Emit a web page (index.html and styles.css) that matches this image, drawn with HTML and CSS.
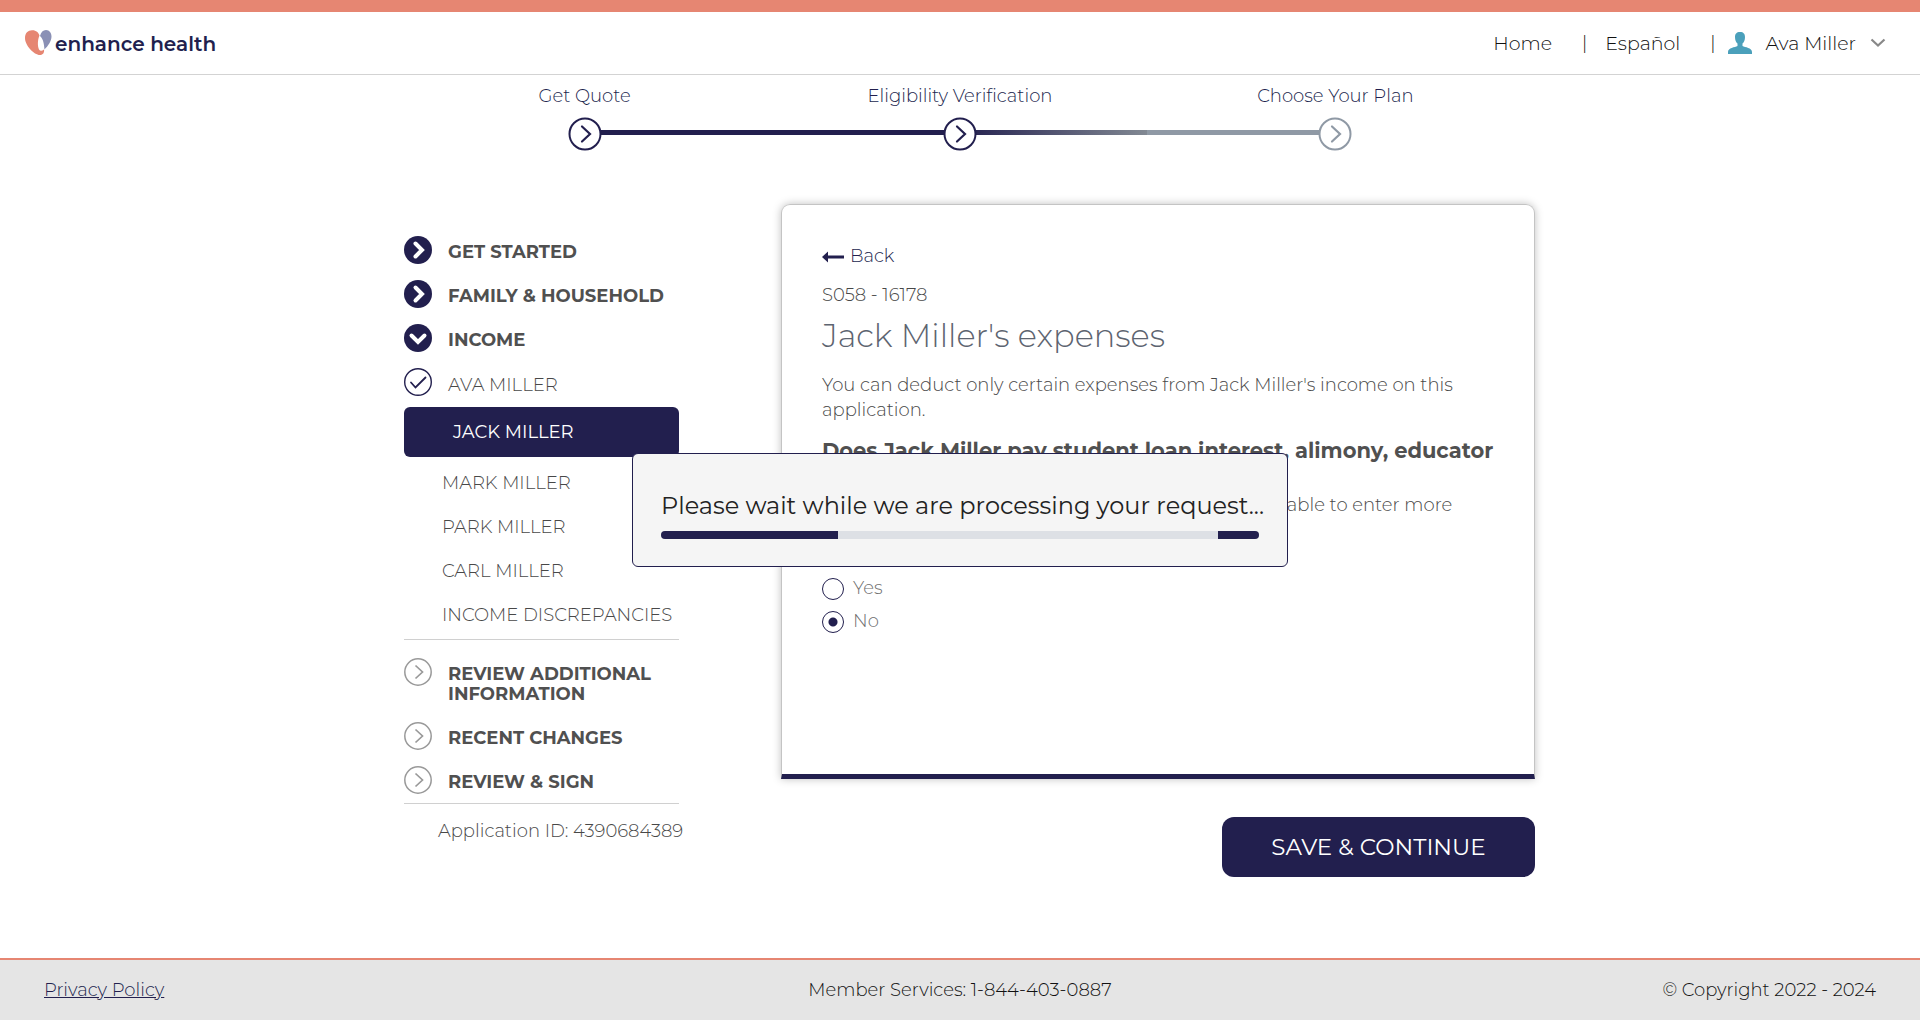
FILE: index.html
```html
<!DOCTYPE html>
<html lang="en">
<head>
<meta charset="utf-8">
<meta name="viewport" content="width=device-width, initial-scale=1">
<title>Enhance Health - Income</title>
<link rel="stylesheet" href="styles.css">
</head>
<body>
<svg class="sprite" aria-hidden="true">
  <symbol id="i-solid-right" viewBox="0 0 28 28"><circle cx="14" cy="14" r="14" fill="#221f4e"/><path d="M11.5 7.5l6.5 6.5-6.500 6.500" fill="none" stroke="#fff" stroke-width="4" stroke-linecap="round" stroke-linejoin="miter"/></symbol>
  <symbol id="i-solid-down" viewBox="0 0 28 28"><circle cx="14" cy="14" r="14" fill="#221f4e"/><path d="M7.500 11.500l6.500 6.500 6.500-6.500" fill="none" stroke="#fff" stroke-width="4" stroke-linecap="round"/></symbol>
  <symbol id="i-check" viewBox="0 0 28 28"><circle cx="14" cy="14" r="13.300" fill="#fff" stroke="#221f4e" stroke-width="1.400"/><path d="M7 14.500l4.500 5L21.500 9.500" fill="none" stroke="#221f4e" stroke-width="1.800" stroke-linecap="round"/></symbol>
  <symbol id="i-open-right" viewBox="0 0 28 28"><circle cx="14" cy="14" r="13.200" fill="#fff" stroke="#999" stroke-width="1.500"/><path d="M11.500 7.500l7 6.500-7 6.500" fill="none" stroke="#999" stroke-width="1.700"/></symbol>
  <symbol id="i-step" viewBox="0 0 34 34"><circle cx="17" cy="17" r="15.500" fill="#fff" stroke="currentColor" stroke-width="2"/><path d="M14 9.500l8 7.500-8 7.500" fill="none" stroke="currentColor" stroke-width="2.200" stroke-linecap="round"/></symbol>
</svg>

<header class="header">
  <a class="brand" href="#" aria-label="enhance health">
    <svg class="brand-mark" viewBox="0 0 27 26" aria-hidden="true">
      <path d="M0 8C0 3 3 .5 7 .3C11 .1 13.500 2.500 14.500 5.500C12.500 10 12.500 16 14 19.500C15.200 21.300 17 21 19 19.500C19.500 22.500 18 25 15 25C9 25 0 15.500 0 8Z" fill="#e68672"/>
      <path d="M15 6C16 2 18 0 21 0C24.500 0 26.500 3 26.500 6.500C26.500 11 23 16 19.500 19.500C19 14 18.500 9.500 15 6Z" fill="#8a90b5"/>
    </svg>
    <span class="brand-name">enhance health</span>
  </a>
  <nav class="top-nav" aria-label="Account">
    <a class="top-link" href="#">Home</a>
    <span class="bar">|</span>
    <a class="top-link" href="#">Español</a>
    <span class="bar">|</span>
    <button class="user" type="button">
      <svg class="person" viewBox="0 0 24 22" aria-hidden="true"><path d="M12 0C15.500 0 17 2 17 5C17 8 16 10.500 14.500 11.500V14C17 15.500 24 15.500 24 20V22H0V20C0 15.500 7 15.500 9.500 14V11.500C8 10.500 7 8 7 5C7 2 8.500 0 12 0Z" fill="#4ba0bb"/></svg>
      <span>Ava Miller</span>
      <svg class="caret" viewBox="0 0 16 10" aria-hidden="true"><path d="M1.500 1.500L8 7.500L14.500 1.500" fill="none" stroke="#888" stroke-width="2.200"/></svg>
    </button>
  </nav>
</header>

<ol class="steps">
  <li class="step done"><span>Get Quote</span><svg class="step-icon" aria-hidden="true"><use href="#i-step"/></svg></li>
  <li class="step current"><span>Eligibility Verification</span><svg class="step-icon" aria-hidden="true"><use href="#i-step"/></svg></li>
  <li class="step next"><span>Choose Your Plan</span><svg class="step-icon" aria-hidden="true"><use href="#i-step"/></svg></li>
</ol>

<div class="content">
  <nav class="side" aria-label="Application sections">
    <a class="row head" href="#"><svg class="icon" aria-hidden="true"><use href="#i-solid-right"/></svg><span>GET STARTED</span></a>
    <a class="row head" href="#"><svg class="icon" aria-hidden="true"><use href="#i-solid-right"/></svg><span>FAMILY &amp; HOUSEHOLD</span></a>
    <a class="row head" href="#"><svg class="icon" aria-hidden="true"><use href="#i-solid-down"/></svg><span>INCOME</span></a>
    <a class="row" href="#"><svg class="icon" aria-hidden="true"><use href="#i-check"/></svg><span>AVA MILLER</span></a>
    <a class="active" href="#" aria-current="page">JACK MILLER</a>
    <a class="sub" href="#">MARK MILLER</a>
    <a class="sub" href="#">PARK MILLER</a>
    <a class="sub" href="#">CARL MILLER</a>
    <a class="sub" href="#">INCOME DISCREPANCIES</a>
    <hr class="rule rule-mid">
    <a class="row head" href="#"><svg class="icon" aria-hidden="true"><use href="#i-open-right"/></svg><span>REVIEW ADDITIONAL<br>INFORMATION</span></a>
    <a class="row head" href="#"><svg class="icon" aria-hidden="true"><use href="#i-open-right"/></svg><span>RECENT CHANGES</span></a>
    <a class="row head" href="#"><svg class="icon" aria-hidden="true"><use href="#i-open-right"/></svg><span>REVIEW &amp; SIGN</span></a>
    <hr class="rule">
    <p class="app-id">Application ID: 4390684389</p>
  </nav>

  <main class="main">
    <section class="card">
      <a class="back" href="#"><svg class="arrow" viewBox="0 0 22 12" aria-hidden="true"><path d="M0 6L6 .5V4.600H22V7.400H6V11.500Z" fill="#221f4e"/></svg>Back</a>
      <p class="code">S058 - 16178</p>
      <h1 class="title">Jack Miller's expenses</h1>
      <p class="text">You can deduct only certain expenses from Jack Miller's income on this application.</p>
      <form id="expenses">
        <fieldset class="question">
          <legend class="legend">Does Jack Miller pay student loan interest, alimony, educator expenses, or other deductions?</legend>
          <p class="text hint">If you choose “Yes” to this question, you'll later on be able to enter more<br>information.</p>
          <label class="option"><input class="radio" type="radio" name="deductions" value="yes">Yes</label>
          <label class="option"><input class="radio" type="radio" name="deductions" value="no" checked>No</label>
        </fieldset>
      </form>
    </section>
    <button class="save" type="submit" form="expenses">SAVE &amp; CONTINUE</button>
  </main>
</div>

<footer class="footer">
  <a class="privacy" href="#">Privacy Policy</a>
  <span>Member Services: 1-844-403-0887</span>
  <span class="copyright">© Copyright 2022 - 2024</span>
</footer>

<div class="modal" role="alertdialog" aria-labelledby="wait">
  <p class="modal-text" id="wait">Please wait while we are processing your request...</p>
  <div class="progress" role="progressbar" aria-labelledby="wait"><span class="progress-head"></span><span class="progress-tail"></span></div>
</div>
</body>
</html>
```
FILE: styles.css
```css
:root {
  --navy: #221f4e;
  --coral: #e68672;
  --text: #484848;
}

* { box-sizing: border-box; }

body {
  margin: 0;
  min-height: 100vh;
  display: flex;
  flex-direction: column;
  background: #fff;
  color: var(--text);
  font: 300 18px/25px Montserrat, Inter, sans-serif;
}

a { color: inherit; text-decoration: none; }
p, h1, ol { margin: 0; padding: 0; }
button, input { font: inherit; }
.sprite { position: absolute; width: 0; height: 0; }

/* Header */
.header {
  display: flex;
  align-items: center;
  justify-content: space-between;
  height: 75px;
  padding: 0 34px 0 25px;
  border-top: 12px solid var(--coral);
  border-bottom: 1px solid #d3d3d3;
}
.brand { display: flex; align-items: center; gap: 3px; }
.brand-mark { width: 27px; height: 26px; }
.brand-name { padding-top: 2px; color: var(--navy); font-size: 20px; font-weight: 600; }
.top-nav { display: flex; align-items: center; color: #111; font-size: 19px; }
.bar { margin: 0 18px 0 30px; font-size: 18px; }
.bar + .user { margin-left: -6px; }
.user {
  display: flex;
  align-items: center;
  gap: 14px;
  padding: 0;
  border: 0;
  background: none;
  color: inherit;
}
.person { width: 24px; height: 22px; }
.caret { width: 16px; height: 10px; }

/* Progress through the enrolment */
.steps {
  display: grid;
  grid-template-columns: repeat(3, 1fr);
  width: 100%;
  max-width: 1126px;
  margin: 0 auto;
  padding-top: 8px;
  list-style: none;
}
.step {
  position: relative;
  display: flex;
  flex-direction: column;
  align-items: center;
  color: var(--navy);
  line-height: 26px;
}
.step-icon { position: relative; z-index: 1; width: 34px; height: 34px; margin-top: 8px; }
.step:not(:last-child)::after {
  content: "";
  position: absolute;
  z-index: 0;
  top: 47px;
  left: 50%;
  width: 100%;
  height: 5px;
  background: var(--navy);
}
.current:not(:last-child)::after {
  background: linear-gradient(90deg, var(--navy), #828993 50%, #8f99a5 50%);
}
.next .step-icon { color: #8f99a5; }

/* Two-column body */
.content {
  display: grid;
  grid-template-columns: 275px minmax(0, 1fr);
  gap: 102px;
  width: 100%;
  max-width: 1152px;
  margin: 0 auto;
  padding: 53px 1px 81px 20px;
}
.side { padding-top: 25px; line-height: 20px; }
.row { display: flex; gap: 16px; padding: 7px 0 9px; }
.row > span { padding: 7px 0 1px; }
.row.head > span { padding: 6px 0 2px; }
.head { color: #505050; font-weight: 700; }
.icon { flex: none; width: 28px; height: 28px; }
.active {
  display: block;
  margin: 2px 0 4px;
  padding: 15px 49px;
  border-radius: 6px;
  background: var(--navy);
  color: #fff;
  font-weight: 400;
}
.sub { display: block; padding: 12px 0 12px 38px; white-space: nowrap; }
.rule { margin: 0; border: 0; border-top: 1px solid #d0d0d0; }
.rule-mid { margin: 2px 0 11px; }
.app-id { padding: 17px 0 0 34px; white-space: nowrap; }

.main { display: flex; flex-direction: column; }
.card {
  min-height: 575px;
  padding: 39px 32px 39px 40px;
  border: 1px solid #c4c4c4;
  border-bottom: 5px solid var(--navy);
  border-radius: 9px 9px 0 0;
  box-shadow: 0 0 8px rgba(0, 0, 0, .25);
}
.back { display: flex; align-items: center; gap: 6px; color: var(--navy); }
.arrow { width: 22px; height: 12px; }
.code { margin-top: 14px; }
.title { margin-top: 8px; color: #5d6470; font-size: 32px; font-weight: 300; line-height: 40px; }
.text { margin-top: 17px; }
.question { margin: 15px 0 0; padding: 0; border: 0; }
.legend { padding: 0; color: #505050; font-size: 21px; font-weight: 700; line-height: 25px; }
.hint { margin: 5px 0 29px; }
.option { display: flex; align-items: center; gap: 9px; height: 33px; color: #6f6f6f; }
.radio {
  appearance: none;
  width: 22px;
  height: 22px;
  margin: 0;
  border: 1px solid var(--navy);
  border-radius: 50%;
  background: #fff;
}
.radio:checked { background: radial-gradient(circle, var(--navy) 4px, #fff 5px); }
.save {
  align-self: flex-end;
  width: 313px;
  height: 60px;
  margin-top: 38px;
  border: 0;
  border-radius: 12px;
  background: var(--navy);
  color: #fff;
  font-size: 23px;
  font-weight: 400;
}

/* Footer */
.footer {
  display: grid;
  grid-template-columns: 1fr auto 1fr;
  align-items: center;
  min-height: 62px;
  margin-top: auto;
  padding: 0 44px;
  border-top: 2px solid var(--coral);
  background: #e5e5e5;
  color: #111;
}
.privacy { justify-self: start; color: var(--navy); text-decoration: underline; }
.copyright { justify-self: end; }

/* Waiting message over the page */
.modal {
  position: fixed;
  inset: 0;
  z-index: 10;
  width: 656px;
  max-width: 100%;
  height: fit-content;
  margin: auto;
  padding: 37px 28px 27px;
  border: 1px solid var(--navy);
  border-radius: 6px;
  background: #f5f5f5;
  color: #222;
}
.modal-text { font-size: 24px; font-weight: 400; line-height: 30px; white-space: nowrap; }
.progress {
  display: flex;
  justify-content: space-between;
  height: 8px;
  margin-top: 10px;
  border-radius: 4px;
  overflow: hidden;
  background: #dde0e5;
}
.progress-head { width: 177px; background: var(--navy); }
.progress-tail { width: 41px; background: var(--navy); }
```
